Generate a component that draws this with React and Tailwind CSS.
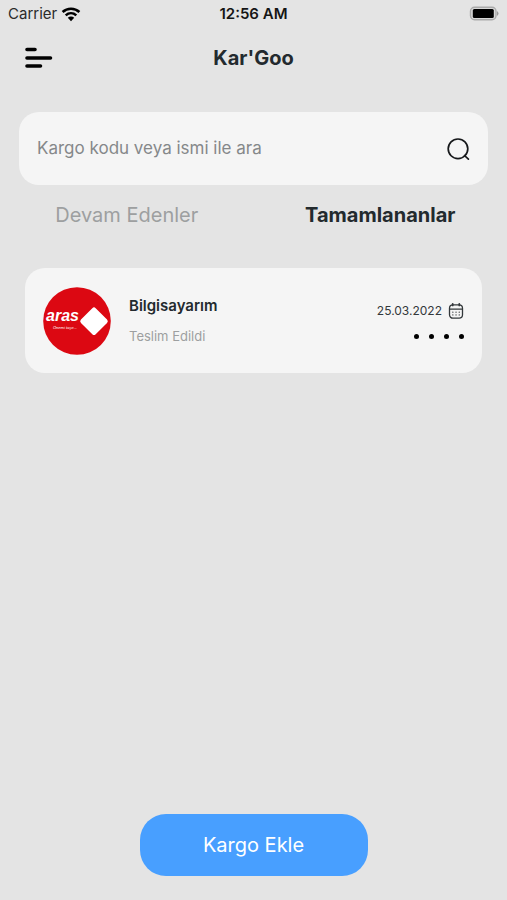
import React from "react";

function StatusBar() {
  return (
    <div className="grid h-7 grid-cols-3 items-center px-2 text-[15px] leading-5 text-[#2b2b2b]">
      <div className="flex items-center gap-1">
        <span>Carrier</span>
        <svg viewBox="0 0 20 15" className="h-[15px] w-5" fill="none" stroke="#000" strokeWidth="2.6" aria-hidden="true">
          <path d="M1.6 5C6.3 0.7 13.7 0.7 18.4 5" />
          <path d="M4.7 8.4C7.8 5.6 12.2 5.6 15.3 8.4" />
          <path d="M6.8 10.8C8.7 9.2 11.3 9.2 13.2 10.8L10 14.2Z" fill="#000" stroke="none" />
        </svg>
      </div>
      <span className="whitespace-nowrap text-center font-semibold text-[#151515]">12:56 AM</span>
      <svg viewBox="0 0 30 16" className="h-4 w-[30px] justify-self-end" aria-hidden="true">
        <rect x="1.5" y="1.2" width="25.5" height="12.6" rx="4" fill="#d8d8d8" stroke="#aaa" strokeWidth="1.4" />
        <rect x="3.8" y="3" width="21" height="9" rx="1.5" fill="#000" />
        <path d="M28 5Q31 7.5 28 10Z" fill="#999" />
      </svg>
    </div>
  );
}

function Header() {
  return (
    <header className="grid grid-cols-[32px_1fr_32px] items-center px-6 pt-3">
      <button type="button" aria-label="Menü" className="h-9">
        <svg viewBox="0 0 30 24" className="h-6 w-[30px]" fill="none" stroke="#000" strokeWidth="3.6" strokeLinecap="round">
          <path d="M3 3.5H11M3 12H26.5M3 20H16.5" />
        </svg>
      </button>
      <h1 className="text-center text-xl font-bold leading-9 text-[#232a2e]">Kar'Goo</h1>
    </header>
  );
}

function SearchBox() {
  return (
    <div className="mx-[19px] mt-9 flex h-[73px] items-center rounded-[20px] bg-[#f5f5f5] px-[18px]">
      <input
        type="text"
        aria-label="Kargo kodu veya ismi ile ara"
        placeholder="Kargo kodu veya ismi ile ara"
        className="min-w-0 flex-1 bg-transparent text-[17px] text-[#232a2e] outline-none placeholder:text-[#85888a]"
      />
      <button type="button" aria-label="Ara">
        <svg viewBox="0 0 24 24" className="h-6 w-6" fill="none" stroke="#16181a" strokeWidth="1.7" strokeLinecap="round">
          <circle cx="12" cy="11.8" r="9.8" />
          <path d="M18.5 18.5L22.4 22.2" />
        </svg>
      </button>
    </div>
  );
}

function Tabs() {
  return (
    <div className="grid grid-cols-2 text-xl leading-[60px]">
      <button type="button" className="text-[#9d9fa0]">Devam Edenler</button>
      <button type="button" className="font-bold text-[#232a2e]">Tamamlananlar</button>
    </div>
  );
}

function ArasLogo() {
  return (
    <svg viewBox="0 0 68 68" className="h-[68px] w-[68px] shrink-0" role="img" aria-label="Aras Kargo">
      <circle cx="34" cy="34" r="33.8" fill="#dc0812" />
      <rect x="40.6" y="23.8" width="20.8" height="20.8" rx="2.4" fill="#fff" transform="rotate(45 51 34.2)" />
      <text x="3" y="34" fill="#fff" fontFamily="Liberation Sans, sans-serif" fontSize="16" fontWeight="700" fontStyle="italic">aras</text>
      <text x="10" y="42" fill="#fff" fontFamily="Liberation Sans, sans-serif" fontSize="4" fontStyle="italic">Önemi taşır...</text>
    </svg>
  );
}

function CalendarIcon() {
  return (
    <svg viewBox="0 0 16 18" className="h-[18px] w-4" fill="none" stroke="#33383b" strokeWidth="1.3" strokeLinecap="round" aria-hidden="true">
      <rect x="1.5" y="2.8" width="13" height="13.4" rx="3.4" />
      <path d="M1.8 7.1H14.2" />
      <path d="M4.7 1.9V3.4M11.3 1.9V3.4" strokeWidth="1.8" />
      <path d="M4.8 10.2H4.9M8 10.2H8.1M11.2 10.2H11.3M4.8 12.9H4.9M8 12.9H8.1M11.2 12.9H11.3" strokeWidth="1.2" />
    </svg>
  );
}

function CargoCard() {
  return (
    <article className="mx-[25px] mt-[23px] flex h-[105px] items-center rounded-[20px] bg-[#f5f5f5] px-[18px]">
      <ArasLogo />
      <div className="ml-[18px] flex-1">
        <h2 className="text-[15px] font-semibold leading-[30px] text-[#232a2e]">Bilgisayarım</h2>
        <p className="text-[13px] leading-[30px] text-[#9d9fa0]">Teslim Edildi</p>
      </div>
      <div className="flex flex-col items-end">
        <div className="flex h-8 items-center gap-[6px]">
          <time dateTime="2022-03-25" className="text-xs text-[#33383b]">25.03.2022</time>
          <CalendarIcon />
        </div>
        <div className="flex h-5 items-center gap-[10px]">
          <span className="size-[5px] rounded-full bg-black" />
          <span className="size-[5px] rounded-full bg-black" />
          <span className="size-[5px] rounded-full bg-black" />
          <span className="size-[5px] rounded-full bg-black" />
        </div>
      </div>
    </article>
  );
}

export default function App() {
  return (
    <div className="flex min-h-screen flex-col bg-[#e4e4e4] font-['Inter',sans-serif]">
      <StatusBar />
      <Header />
      <main className="flex flex-1 flex-col">
        <SearchBox />
        <Tabs />
        <CargoCard />
        <button type="button" className="mb-6 mt-auto h-[62px] w-[228px] self-center rounded-[26px] bg-[#489fff] text-xl text-white">
          Kargo Ekle
        </button>
      </main>
    </div>
  );
}
